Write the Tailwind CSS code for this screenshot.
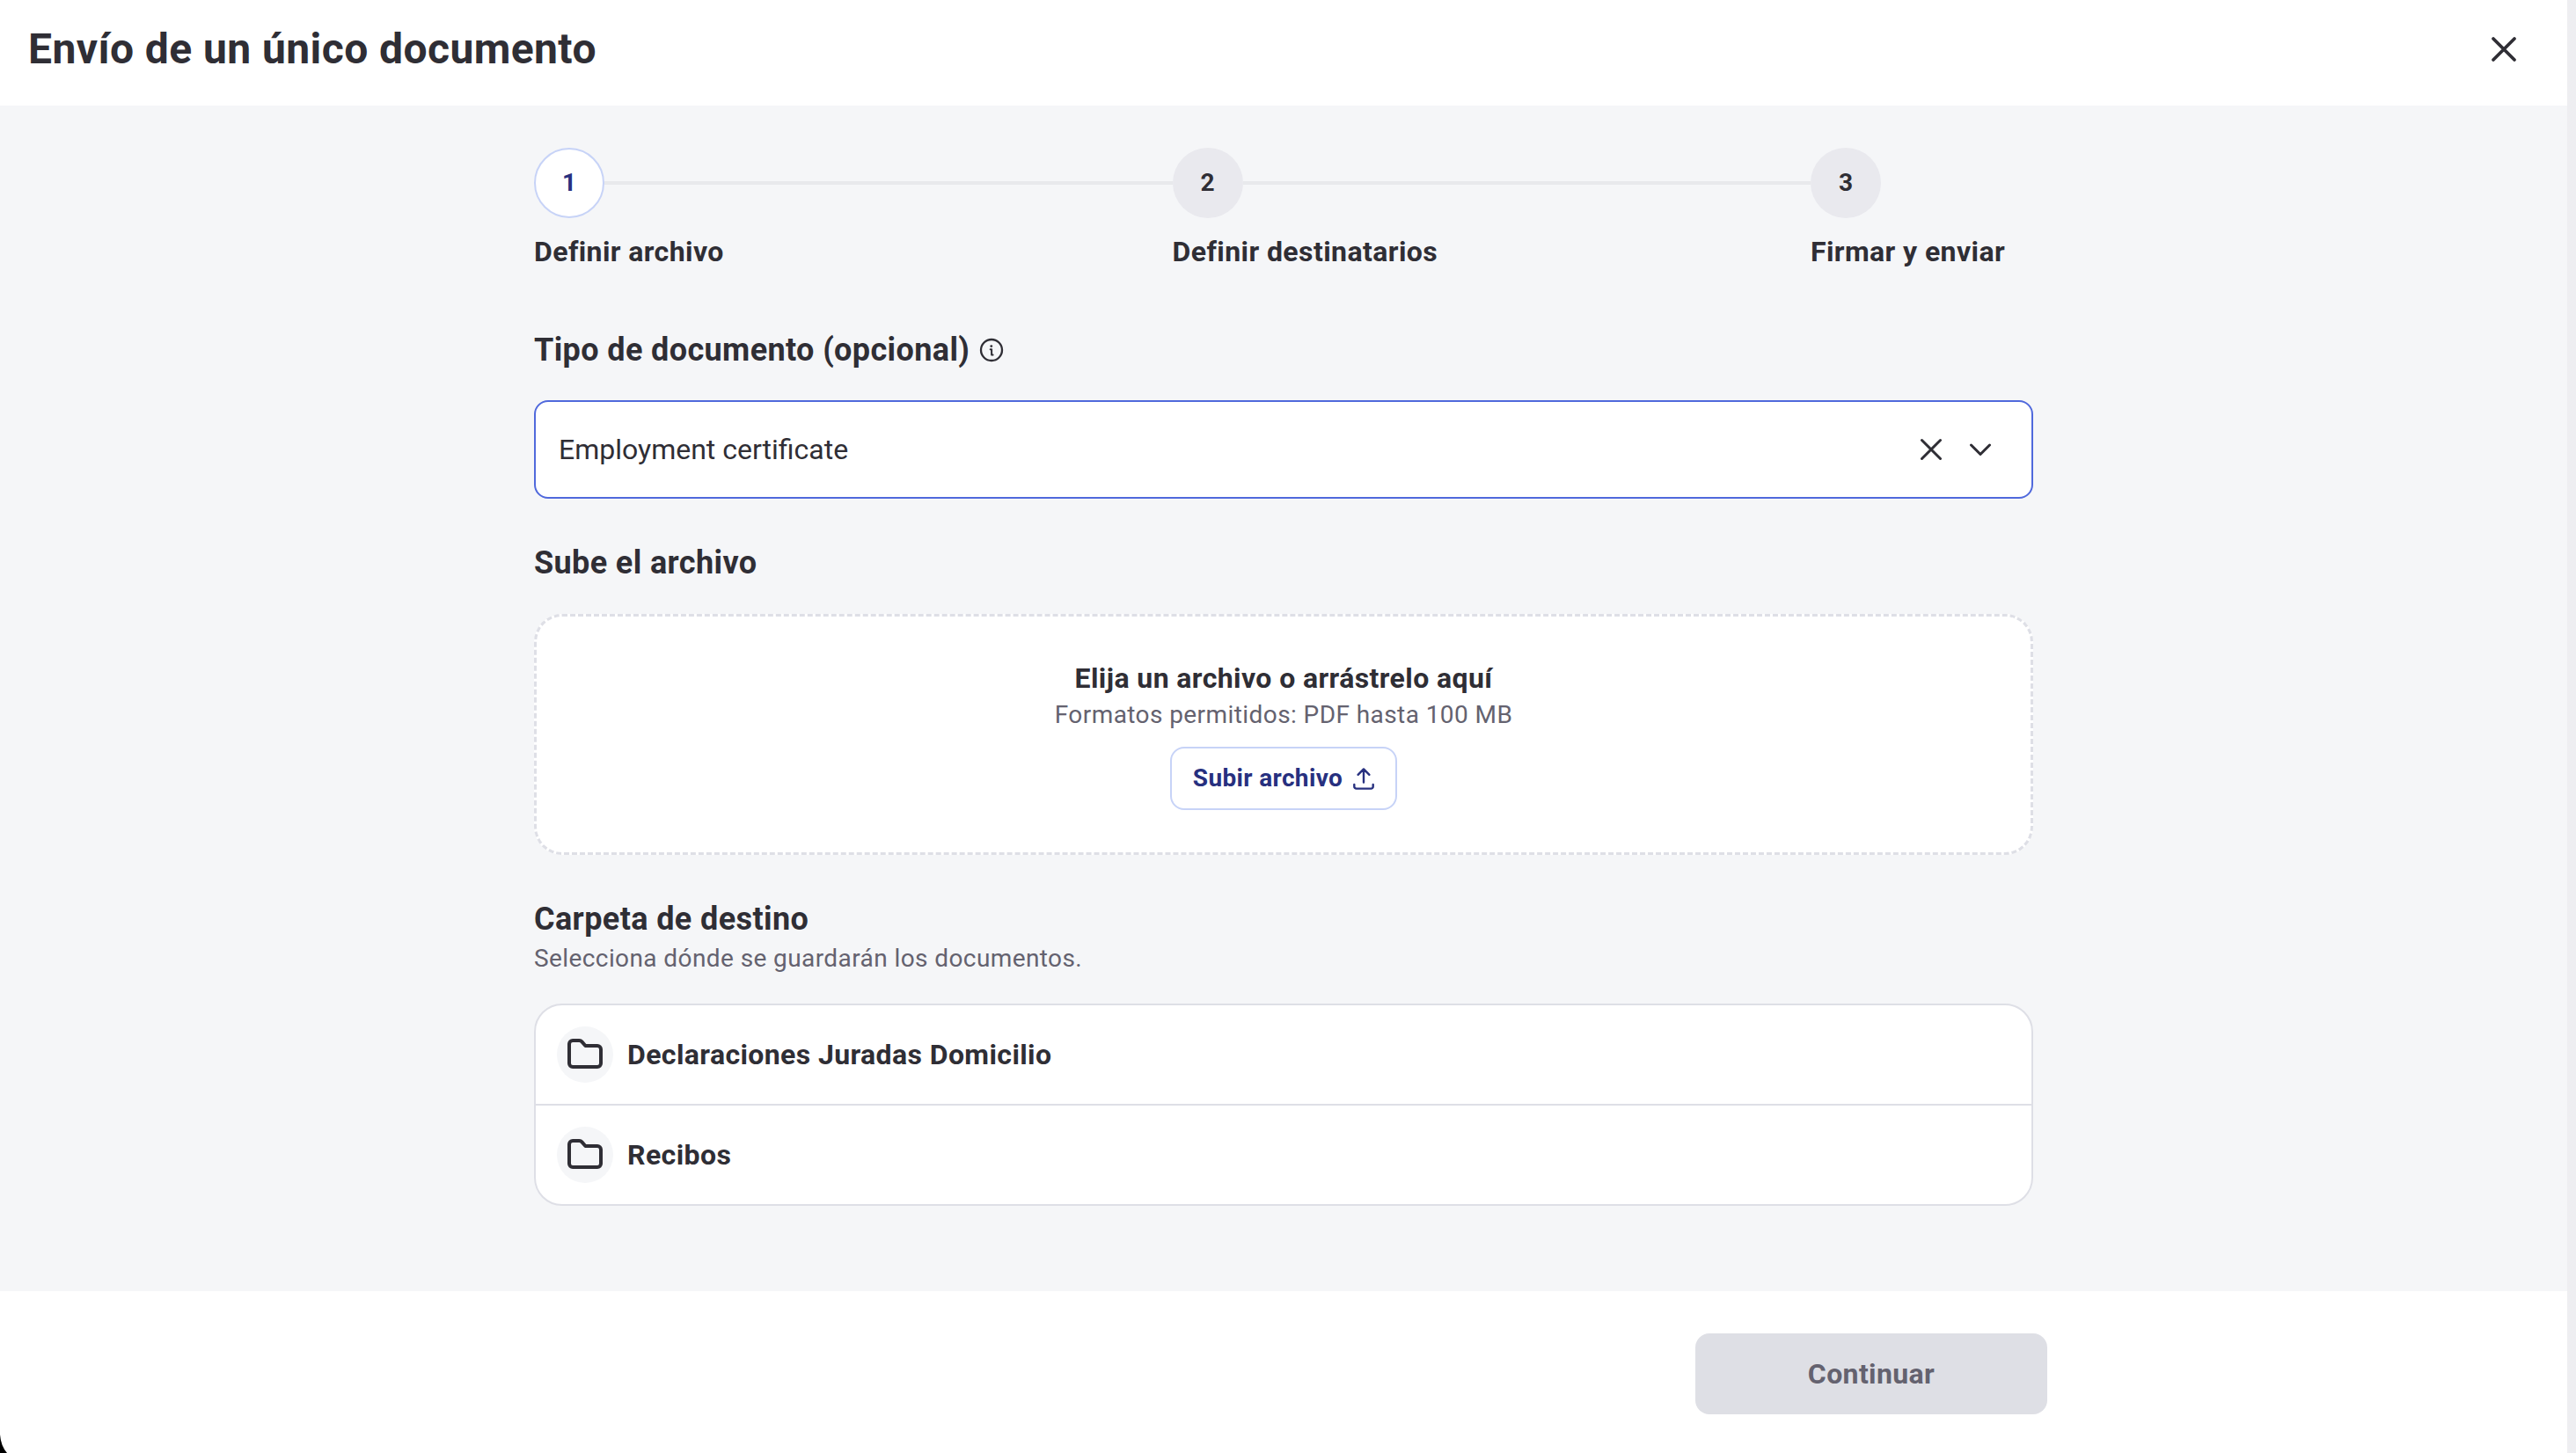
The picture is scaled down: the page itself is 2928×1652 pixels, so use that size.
<!DOCTYPE html>
<html lang="es">
  <head>
    <meta charset="UTF-8" />
    <title>Envío de un único documento</title>
    <script src="https://cdn.jsdelivr.net/npm/@tailwindcss/browser@4"></script>
  </head>

  <body class="bg-[#eeeef1] font-[Roboto,sans-serif] text-[#2f2e35]">
    <!-- Modal -->
    <div class="relative flex h-[1652px] w-[2918px] flex-col overflow-hidden bg-white">
      <!-- Header -->
      <header class="flex h-[120px] shrink-0 items-center justify-between pb-2 pl-8 pr-14">
        <h1 class="text-[48px] leading-[56px] font-bold tracking-[0.42px]">Envío de un único documento</h1>
        <button aria-label="Cerrar">
          <svg class="size-8" viewBox="0 0 32 32" fill="none" stroke="currentColor" stroke-width="3.8" stroke-linecap="round">
            <path d="M4 4l24 24M28 4L4 28" />
          </svg>
        </button>
      </header>

      <!-- Content -->
      <main class="h-[1348px] shrink-0 bg-[#f5f6f8] pt-12">
        <div class="mx-auto w-[1704px]">
          <!-- Steps -->
          <ol class="flex text-[32px] leading-[48px] font-bold">
            <li class="w-[725.5px]">
              <div class="flex items-center">
                <span class="flex size-20 items-center justify-center rounded-full border-2 border-[#c7d3f7] bg-white text-[28px] text-[#27307f]">1</span>
                <span class="h-1 flex-1 bg-[#e8e9ec]"></span>
              </div>
              <p class="mt-3.5 tracking-[0.4px]">Definir archivo</p>
            </li>
            <li class="w-[725.5px]">
              <div class="flex items-center">
                <span class="flex size-20 items-center justify-center rounded-full bg-[#e9e9ee] text-[28px]">2</span>
                <span class="h-1 flex-1 bg-[#e8e9ec]"></span>
              </div>
              <p class="mt-3.5 tracking-[0.42px]">Definir destinatarios</p>
            </li>
            <li class="flex-1">
              <span class="flex size-20 items-center justify-center rounded-full bg-[#e9e9ee] text-[28px]">3</span>
              <p class="mt-3.5 tracking-[0.4px]">Firmar y enviar</p>
            </li>
          </ol>

          <!-- Document type -->
          <div class="mt-[61px] flex items-center gap-[11px]">
            <h2 class="text-[36px] leading-[54px] font-bold tracking-[0.38px]">Tipo de documento (opcional)</h2>
            <svg class="size-7" viewBox="0 0 28 28" fill="none" stroke="currentColor" stroke-width="2.3" stroke-linecap="round" stroke-linejoin="round">
              <circle cx="14" cy="14" r="12" />
              <path d="M12.7 13.2h1.4v6.2h1.5" stroke-width="2" />
              <circle cx="13.8" cy="9.6" r="1.4" fill="currentColor" stroke="none" />
            </svg>
          </div>
          <div class="mt-[30px] flex h-28 items-center rounded-2xl border-2 border-[#5069dc] bg-white pl-[26px] pr-[42px]">
            <span class="flex-1 text-[32px] leading-[48px]">Employment certificate</span>
            <svg class="size-8" viewBox="0 0 32 32" fill="none" stroke="currentColor" stroke-width="3" stroke-linecap="round">
              <path d="M5.5 5.5l21 21M26.5 5.5l-21 21" />
            </svg>
            <svg class="ml-6 size-8" viewBox="0 0 32 32" fill="none" stroke="currentColor" stroke-width="3" stroke-linecap="round" stroke-linejoin="round">
              <path d="M5.5 11L16 21.5L26.5 11" />
            </svg>
          </div>

          <!-- Upload -->
          <h2 class="mt-[46px] text-[36px] leading-[54px] font-bold tracking-[0.38px]">Sube el archivo</h2>
          <div class="mt-[31px] flex h-[274px] flex-col items-center rounded-[32px] border-3 border-dashed border-[#dedfe6] bg-white pt-[47px]">
            <p class="text-[32px] leading-[46px] font-bold tracking-[0.4px]">Elija un archivo o arrástrelo aquí</p>
            <p class="text-[28px] leading-[38px] tracking-[0.42px] text-[#64626f]">Formatos permitidos: PDF hasta 100 MB</p>
            <button class="mt-[17px] flex h-[72px] w-[258px] items-center justify-center gap-2.5 rounded-2xl border-2 border-[#c7d3f7] pl-0.5 text-[28px] font-bold tracking-[0.35px] text-[#27307f]">
              Subir archivo
              <svg class="size-7" viewBox="0 0 28 28" fill="none" stroke="currentColor" stroke-width="2.4" stroke-linecap="round" stroke-linejoin="round">
                <path d="M14 18.5V3.6M7.6 9.8L14 3.4l6.4 6.4M3.3 21v2.2a2.4 2.4 0 0 0 2.4 2.4h16.6a2.4 2.4 0 0 0 2.4-2.4V21" />
              </svg>
            </button>
          </div>

          <!-- Target folder -->
          <h2 class="mt-[46px] text-[36px] leading-[54px] font-bold tracking-[0.39px]">Carpeta de destino</h2>
          <p class="text-[28px] leading-9 tracking-[0.41px] text-[#64626f]">Selecciona dónde se guardarán los documentos.</p>
          <ul class="mt-[33px] divide-y-2 divide-[#dedfe6] rounded-[32px] border-2 border-[#dedfe6] bg-white text-[32px] font-bold">
            <li class="flex h-[114px] items-center gap-4 px-6">
              <span class="flex size-16 items-center justify-center rounded-full bg-[#f5f6f8]">
                <svg class="size-12" viewBox="0 0 24 24" fill="none" stroke="currentColor" stroke-width="2" stroke-linejoin="round">
                  <path d="M3 6a2 2 0 0 1 2-2h3.7a2 2 0 0 1 1.5.7L12.2 7H19a2 2 0 0 1 2 2v8a2 2 0 0 1-2 2H5a2 2 0 0 1-2-2z" />
                </svg>
              </span>
              <span class="tracking-[0.39px]">Declaraciones Juradas Domicilio</span>
            </li>
            <li class="flex h-28 items-center gap-4 px-6">
              <span class="flex size-16 items-center justify-center rounded-full bg-[#f5f6f8]">
                <svg class="size-12" viewBox="0 0 24 24" fill="none" stroke="currentColor" stroke-width="2" stroke-linejoin="round">
                  <path d="M3 6a2 2 0 0 1 2-2h3.7a2 2 0 0 1 1.5.7L12.2 7H19a2 2 0 0 1 2 2v8a2 2 0 0 1-2 2H5a2 2 0 0 1-2-2z" />
                </svg>
              </span>
              <span class="tracking-[0.4px]">Recibos</span>
            </li>
          </ul>
        </div>
      </main>

      <!-- Footer -->
      <footer class="flex flex-1 items-start justify-end pr-[591px] pt-12">
        <button class="h-[92px] w-[400px] rounded-2xl bg-[#dedfe5] text-[32px] font-bold tracking-[0.38px] text-[#64626f]" disabled>Continuar</button>
      </footer>

      <!-- Rounded window corner -->
      <svg class="absolute bottom-0 left-0 h-6 w-3" viewBox="0 0 12 24">
        <path d="M0 3Q1 16 8 24H0z" />
      </svg>
    </div>
  </body>
</html>
